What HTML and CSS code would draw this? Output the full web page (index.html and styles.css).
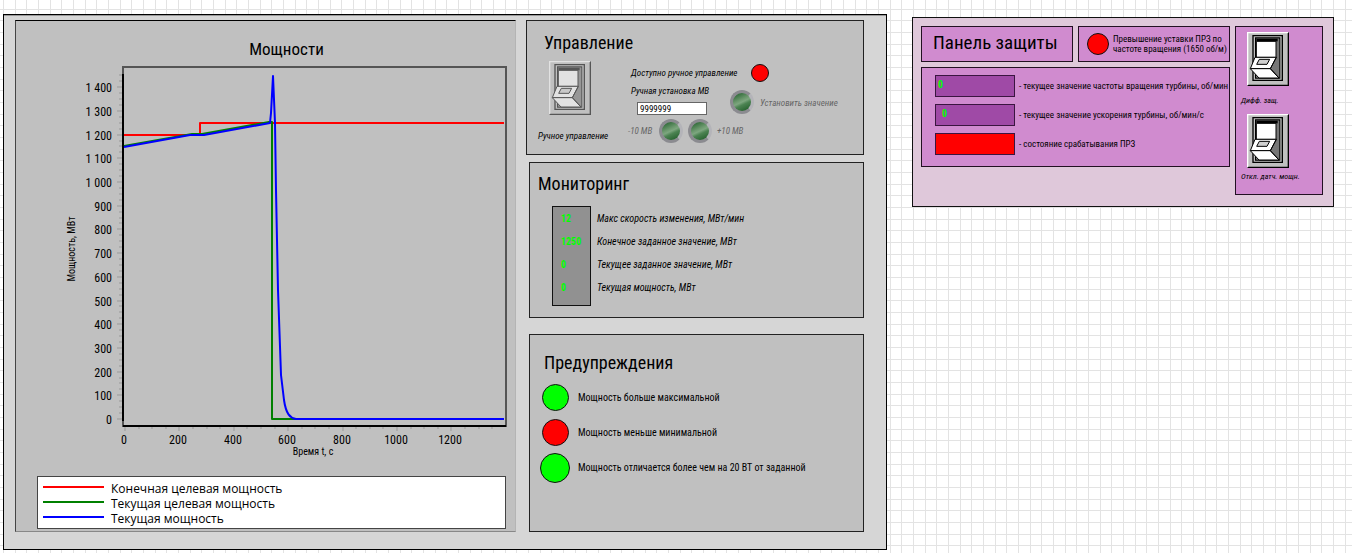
FILE: index.html
```html
<!DOCTYPE html>
<html lang="ru">
<head>
<meta charset="utf-8">
<title>Управление мощностью</title>
<link rel="stylesheet" href="styles.css">
</head>
<body>
<svg class="defs" aria-hidden="true">
  <symbol id="switch" viewBox="0 0 126 162">
    <path class="sw-face" d="M0 0H126V162H0Z"/>
    <path class="sw-lite" d="M0 0H126L122 4H4V158L0 162Z"/>
    <path class="sw-dark" d="M126 0V162H0L4 158H122V4Z"/>
    <path class="sw-well" d="M18 11H106V145H18Z"/>
    <path class="sw-well" d="M26 18H98V138H26Z"/>
    <path class="sw-shade" d="M28 20H97V137H28Z"/>
    <path class="sw-dark" d="M28 20H92V28H28Z"/>
    <path class="sw-key" d="M28 28H87V76H28Z"/>
    <path class="sw-key" d="M24 76H88L70 110H10Z"/>
    <path class="sw-key" d="M10 110H70L96 138H36Z"/>
    <path class="sw-slot" d="M37 82H68L60 97H29Z"/>
    <path class="sw-line" d="M88 76L70 110L96 138"/>
  </symbol>
</svg>
<main class="workspace">
  <section class="station">
    <figure class="chart">
      <figcaption class="chart-title">Мощности</figcaption>
      <svg class="plot" viewBox="16 60 499 400" role="img" aria-label="График мощностей">
        <rect class="frame" x="123" y="67" width="383" height="359"/>
        <g id="ticks" class="ticks"></g>
        <path class="axis" d="M123 74V421M123 426H506"/>
        <path class="series red" d="M124 135H200V123H504"/>
        <path class="series green" d="M124 146L192 134H202L269 122H272V419H504"/>
        <path class="series blue" d="M124 147L190 135H204L270 123L271 113L273 76L275 123L276 190L278 290L281 375L284 400C286 414 290 418 296 419H504"/>
        <g id="labels" class="tick-labels"></g>
        <text class="axis-name" x="313" y="455" text-anchor="middle">Время t, с</text>
        <text class="axis-name" transform="translate(75 249) rotate(-90)" text-anchor="middle">Мощность, МВт</text>
      </svg>
      <ul class="legend">
        <li><span class="swatch red-line"></span>Конечная целевая мощность</li>
        <li><span class="swatch green-line"></span>Текущая целевая мощность</li>
        <li><span class="swatch blue-line"></span>Текущая мощность</li>
      </ul>
    </figure>
    <div class="side">
      <section class="card control">
        <h2>Управление</h2>
        <div class="control-body">
          <div class="manual">
            <button class="switch faded" type="button" id="manual" aria-labelledby="manual-label"><svg><use href="#switch"/></svg></button>
            <label class="note" id="manual-label" for="manual">Ручное управление</label>
          </div>
          <div class="manual-settings">
            <div class="available"><span class="note">Доступно ручное управление</span><span class="lamp small red-lamp"></span></div>
            <div class="setpoint">
              <div class="field">
                <label class="note" for="power">Ручная установка МВ</label>
                <input id="power" type="text" value="9999999">
              </div>
              <button class="knob" type="button" id="apply"></button>
              <label class="note muted" for="apply">Установить значение</label>
            </div>
            <div class="steps">
              <label class="note muted" for="minus">-10 МВ</label>
              <button class="knob" type="button" id="minus"></button>
              <button class="knob" type="button" id="plus"></button>
              <label class="note muted" for="plus">+10 МВ</label>
            </div>
          </div>
        </div>
      </section>
      <section class="card monitor">
        <h2>Мониторинг</h2>
        <div class="readings">
          <ul class="values"><li>12</li><li>1250</li><li>0</li><li>0</li></ul>
          <ul class="names"><li>Макс скорость изменения, МВт/мин</li><li>Конечное заданное значение, МВт</li><li>Текущее заданное значение, МВт</li><li>Текущая мощность, МВт</li></ul>
        </div>
      </section>
      <section class="card warnings">
        <h2>Предупреждения</h2>
        <ul class="alerts">
          <li><span class="lamp green-lamp"></span>Мощность больше максимальной</li>
          <li><span class="lamp red-lamp"></span>Мощность меньше минимальной</li>
          <li><span class="lamp large green-lamp"></span>Мощность отличается более чем на 20 ВТ от заданной</li>
        </ul>
      </section>
    </div>
  </section>
  <section class="protection">
    <div class="guard-main">
      <div class="guard-top">
        <h1 class="tile">Панель защиты</h1>
        <p class="tile overspeed"><span class="lamp medium red-lamp"></span><span>Превышение уставки ПРЗ по<br>частоте вращения (1650 об/м)</span></p>
      </div>
      <ul class="tile states">
        <li><output class="meter">0</output>- текущее значение частоты вращения турбины, об/мин</li>
        <li><output class="meter inset">0</output>- текущее значение ускорения турбины, об/мин/с</li>
        <li><output class="meter tripped"></output>- состояние срабатывания ПРЗ</li>
      </ul>
    </div>
    <div class="tile toggles">
      <button class="switch" type="button" id="diff"><svg><use href="#switch"/></svg></button>
      <label for="diff">Дифф. защ.</label>
      <button class="switch" type="button" id="sensor"><svg><use href="#switch"/></svg></button>
      <label for="sensor">Откл. датч. мощн.</label>
    </div>
  </section>
</main>
<script src="chart.js"></script>
</body>
</html>
```
FILE: styles.css
```css
* { box-sizing: border-box; }
body {
  margin: 0;
  min-height: 100vh;
  font-family: "Roboto Condensed", Roboto, "Liberation Sans", sans-serif;
  font-size: 10px;
  color: #000;
  background-color: #fff;
  background-image:
    linear-gradient(90deg, transparent 3px, #e3e3e3 3px 4px, transparent 4px 15px, #e3e3e3 15px 16px, transparent 16px 26px, #e3e3e3 26px 27px, transparent 27px),
    linear-gradient(transparent 9px, #e3e3e3 9px 10px, transparent 10px 20px, #e3e3e3 20px 21px, transparent 21px 32px, #e3e3e3 32px 33px, transparent 33px);
  background-size: 35px 35px;
}
ul, p, h1, h2, figure { margin: 0; padding: 0; list-style: none; font-weight: 400; }
button { padding: 0; border: 0; font: inherit; }
.defs { position: absolute; width: 0; height: 0; }
.workspace {
  display: grid;
  grid-template-columns: minmax(0, 884fr) minmax(0, 422fr);
  align-items: start;
  gap: 25px;
  padding: 14px 18px 3px 3px;
}

.station {
  display: grid;
  grid-template-columns: minmax(0, 501fr) minmax(0, 338fr);
  gap: 10px;
  padding: 5px 22px 17px 11px;
  background: #d6d6d6;
  border: 1px solid #000;
  box-shadow: inset 0 1px #999;
}
.chart { background: #c0c0c0; border: 1px solid #444; border-top-color: #000; border-right-color: #b4b4b4; border-bottom-color: #888; }
.chart-title { padding-top: 16px; height: 39px; padding-left: 42px; text-align: center; font-size: 17px; line-height: 24px; }
.plot { display: block; width: 100%; height: auto; }
.frame { fill: none; stroke: #555; stroke-width: 2; }
.axis { fill: none; stroke: #000; stroke-width: 2; }
.ticks { stroke: #999; stroke-width: 1; }
.tick-labels { font-size: 12px; }
.axis-name { font-size: 10px; }
.series { fill: none; stroke-width: 2; stroke-linejoin: round; }
.red { stroke: #f00; }
.green { stroke: #008000; }
.blue { stroke: #00f; }
.legend { margin: 16px 9px 2px 21px; padding: 4px 5px 2px; background: #fff; border: 1px solid #444; font-family: "Open Sans", sans-serif; font-size: 12px; line-height: 15px; }
.legend li { display: flex; align-items: center; gap: 7px; }
.swatch { width: 61px; height: 2px; margin-bottom: 3px; }
.red-line { background: #f00; }
.green-line { background: #008000; }
.blue-line { background: #00f; }

.side { display: flex; flex-direction: column; }
.card { background: #c0c0c0; border: 1px solid #222; }
h2 { font-size: 18px; line-height: 26px; }
.note { font-size: 9px; line-height: 12px; font-style: italic; white-space: nowrap; }
.muted { color: #666; }
.control { min-height: 135px; padding: 9px 8px 0 11px; }
.control h2 { padding-left: 6px; }
.control-body { display: flex; gap: 18px; }
.manual { width: 72px; display: flex; flex-direction: column; gap: 15px; padding-top: 5px; }
.manual .switch { margin-left: 11px; }
.switch { display: block; width: 42px; height: 54px; background: none; }
.switch svg { display: block; width: 100%; height: 100%; }
.sw-face { fill: #c0c0c0; }
.sw-lite { fill: #fff; }
.sw-dark { fill: #000; }
.sw-well { fill: #c0c0c0; stroke: #000; stroke-width: 4; }
.sw-shade { fill: #777; }
.sw-key { fill: #fff; stroke: #000; stroke-width: 3; }
.sw-slot { fill: #d0d0d0; stroke: #000; stroke-width: 3; }
.sw-line { fill: none; stroke: #000; stroke-width: 3; }
.faded svg { opacity: 0.55; }

.manual-settings { padding-top: 8px; }
.available { display: flex; align-items: center; gap: 14px; padding-left: 3px; height: 18px; }
.setpoint { display: flex; align-items: center; gap: 6px; padding: 3px 0 0 3px; }
.field { display: flex; flex-direction: column; gap: 5px; width: 93px; }
.setpoint .knob { margin-top: 4px; }
.setpoint .muted { margin-top: 6px; }
input { width: 70px; height: 13px; margin-left: 6px; padding: 0 2px; border: 1px solid #666; background: #fff; font: 9px "Roboto Condensed", Roboto, sans-serif; }
.steps { display: flex; align-items: center; gap: 5px; padding-top: 4px; }
.steps label { width: 26px; }
.knob {
  flex: none;
  width: 24px;
  height: 24px;
  border-radius: 50%;
  border: 3px solid #8b8b90;
  border-right-color: #b4b4b9;
  background: linear-gradient(155deg, #2f6a38 10%, #6d996f 40%, #7da67f 50%, #4c8352 62%, #27622f 90%);
}
.lamp { flex: none; width: 27px; height: 27px; border: 1px solid #111; border-radius: 50%; }
.small { width: 18px; height: 18px; }
.medium { width: 22px; height: 22px; }
.large { width: 30px; height: 30px; }
.red-lamp { background: #f00; }
.green-lamp { background: #0f0; }

.monitor { min-height: 156px; margin: 7px 0 16px 3px; padding: 8px; }
.readings { display: flex; gap: 6px; padding: 9px 0 0 14px; line-height: 23px; }
.values { width: 39px; padding: 0 8px 6px; background: #919191; border: 1px solid #111; color: #0f0; font-weight: 700; font-size: 10px; }
.names { font-style: italic; padding-top: 1px; }
.warnings { flex: 1; margin-left: 3px; padding: 15px 11px; }
.warnings h2 { padding-left: 3px; }
.alerts { padding-top: 4px; }
.alerts li { display: flex; align-items: center; gap: 8px; height: 35px; }
.alerts .lamp { margin: 0 1px; }
.alerts .large { margin: 0 0 0 -1px; }

.protection {
  display: grid;
  grid-template-columns: minmax(0, 309fr) minmax(0, 88fr);
  gap: 5px;
  margin-top: 3px;
  padding: 8px 10px 11px 8px;
  background: #dfc8da;
  border: 1px solid #111;
}
.guard-top { display: grid; grid-template-columns: minmax(0, 1fr) minmax(0, 1fr); gap: 5px; height: 36px; margin-bottom: 5px; }
.tile { background: #d08bcf; border: 1px solid #221022; }
h1.tile { padding-left: 11px; font-size: 19px; line-height: 32px; white-space: nowrap; }
.overspeed { display: flex; align-items: center; gap: 4px; padding-left: 8px; font-size: 9px; line-height: 10px; white-space: nowrap; }
.states { padding: 7px 0 11px 13px; display: flex; flex-direction: column; gap: 7px; font-size: 9px; }
.states li { display: flex; align-items: center; gap: 4px; line-height: 22px; white-space: nowrap; }
.meter { flex: none; width: 80px; height: 22px; padding-left: 2px; background: #9f4aa6; border: 1px solid #3a1540; color: #0f0; font-size: 10px; font-weight: 700; line-height: 18px; }
.inset { padding-left: 6px; }
.tripped { background: #f00; }
.toggles { padding: 5px 5px 12px; font-size: 8px; font-style: italic; line-height: 10px; }
.toggles .switch { margin-left: 6px; }
.toggles label { display: block; margin: 10px 0 8px; white-space: nowrap; }
.toggles label:last-child { margin-bottom: 0; margin-top: 4px; }
```
FILE: chart.js
```js
const NS = "http://www.w3.org/2000/svg";
const ticks = document.getElementById("ticks");
const labels = document.getElementById("labels");

function tick(d) {
  const path = document.createElementNS(NS, "path");
  path.setAttribute("d", d);
  ticks.append(path);
}

function label(x, y, anchor, value) {
  const text = document.createElementNS(NS, "text");
  text.setAttribute("x", x);
  text.setAttribute("y", y);
  text.setAttribute("text-anchor", anchor);
  text.textContent = value;
  labels.append(text);
}

for (let v = 0; v <= 1450; v += 25) {
  const y = Math.round(419 - v * 0.237);
  const major = v % 100 === 0;
  tick(`M${major ? 117 : 119} ${y}H122`);
  if (major) label(112, y + 5, "end", v >= 1000 ? `1 ${String(v).slice(1)}` : v);
}

for (let v = 0; v <= 1350; v += 50) {
  const x = Math.round(125 + v * 0.272);
  const major = v % 200 === 0;
  tick(`M${x} 427V${major ? 431 : 429}`);
  if (major) label(x - 1, 444, "middle", v);
}
```
